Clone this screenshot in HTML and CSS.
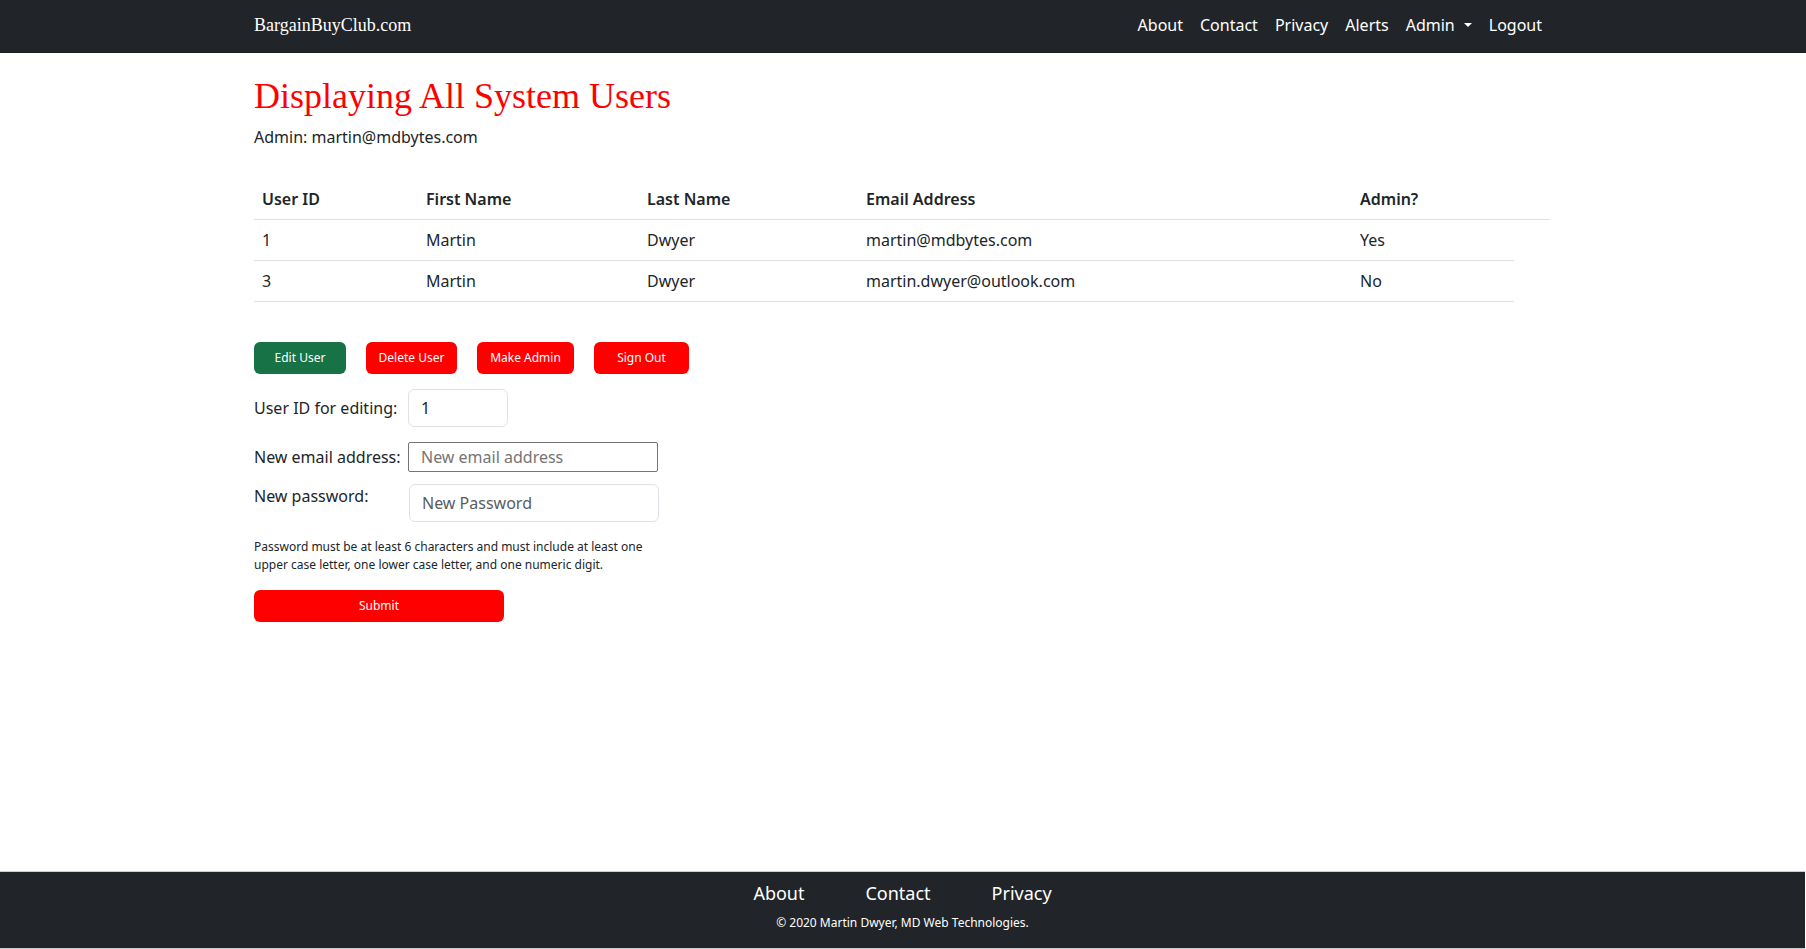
FILE: index.html
```html
<!DOCTYPE html>
<html lang="en">
<head>
<meta charset="utf-8">
<meta name="viewport" content="width=device-width, initial-scale=1">
<title>BargainBuyClub.com</title>
<link rel="stylesheet" href="styles.css">
</head>
<body>
<header class="site-header">
  <div class="container header-inner">
    <a class="brand" href="#">BargainBuyClub.com</a>
    <nav class="main-nav">
      <a href="#">About</a>
      <a href="#">Contact</a>
      <a href="#">Privacy</a>
      <a href="#">Alerts</a>
      <a class="dropdown" href="#">Admin</a>
      <a href="#">Logout</a>
    </nav>
  </div>
</header>
<main class="container content">
  <h1 class="title">Displaying All System Users</h1>
  <p class="current-user">Admin: martin@mdbytes.com</p>
  <table class="users">
    <colgroup><col class="c-id"><col class="c-first"><col class="c-last"><col class="c-email"><col class="c-admin"><col class="c-extra"></colgroup>
    <thead>
      <tr><th>User ID</th><th>First Name</th><th>Last Name</th><th>Email Address</th><th>Admin?</th><th></th></tr>
    </thead>
    <tbody>
      <tr><td>1</td><td>Martin</td><td>Dwyer</td><td>martin@mdbytes.com</td><td>Yes</td></tr>
      <tr><td>3</td><td>Martin</td><td>Dwyer</td><td>martin.dwyer@outlook.com</td><td>No</td></tr>
    </tbody>
  </table>
  <div class="actions">
    <button class="btn btn-edit" type="button">Edit User</button>
    <button class="btn btn-delete" type="button">Delete User</button>
    <button class="btn btn-make" type="button">Make Admin</button>
    <button class="btn btn-out" type="button">Sign Out</button>
  </div>
  <form class="edit-form">
    <div class="field">
      <label for="user-id">User ID for editing:</label>
      <input class="control control-short" id="user-id" type="text" value="1">
    </div>
    <div class="field">
      <label for="email">New email address:</label>
      <input class="control control-plain" id="email" type="email" placeholder="New email address">
    </div>
    <div class="field field-top">
      <label for="password">New password:</label>
      <input class="control" id="password" type="password" placeholder="New Password">
    </div>
    <p class="hint">Password must be at least 6 characters and must include at least one<br>upper case letter, one lower case letter, and one numeric digit.</p>
    <button class="btn btn-submit" type="submit">Submit</button>
  </form>
</main>
<footer class="site-footer">
  <nav class="footer-nav">
    <a href="#">About</a>
    <a href="#">Contact</a>
    <a href="#">Privacy</a>
  </nav>
  <p class="copyright">© 2020 Martin Dwyer, MD Web Technologies.</p>
</footer>
</body>
</html>
```
FILE: styles.css
```css
* { box-sizing: border-box; }
body {
  display: flex;
  flex-direction: column;
  min-height: 100vh;
  margin: 0;
  background: #fff;
  color: #212529;
  font: 16px/24px "Noto Sans", sans-serif;
}
h1, p { margin: 0; }
a { color: inherit; text-decoration: none; }
.container {
  width: 100%;
  max-width: 1320px;
  margin: 0 auto;
  padding: 0 13px 0 11px;
}
.site-header {
  background: #212529;
  border-bottom: 1px solid #1b1b24;
  color: #fff;
}
.header-inner {
  display: flex;
  align-items: center;
  justify-content: space-between;
  height: 52px;
  padding-bottom: 3px;
}
.brand { font: 18px/30px "Mountains of Christmas", "Liberation Serif", serif; }
.main-nav { display: flex; gap: 17px; padding-right: 8px; }
.dropdown { display: flex; align-items: center; gap: 9px; }
.dropdown::after {
  content: "";
  border: 4px solid transparent;
  border-top-color: currentColor;
  border-bottom: 0;
}
.content { flex: 1; padding-top: 18px; }
.title {
  margin-bottom: 4px;
  color: #f00;
  font: 36px/50px "Mountains of Christmas", "Liberation Serif", serif;
}
.current-user { margin-bottom: 30px; }
.users {
  width: 100%;
  table-layout: fixed;
  border-spacing: 0;
  text-align: left;
}
.users th, .users td { padding: 8px; border-bottom: 1px solid #dee2e6; }
.users th { font-weight: 600; }
.c-id { width: 164px; }
.c-first { width: 221px; }
.c-last { width: 219px; }
.c-email { width: 494px; }
.c-admin { width: 162px; }
.actions { display: flex; gap: 20px; margin: 40px 0 15px; }
.btn {
  height: 32px;
  padding: 0;
  border: 0;
  border-radius: 6px;
  background: #f00;
  color: #fff;
  font: 12px/18px "Noto Sans", sans-serif;
}
.btn-edit { width: 92px; background: #177245; }
.btn-delete { width: 91px; }
.btn-make { width: 97px; }
.btn-out { width: 95px; }
.btn-submit { width: 250px; }
.field { display: flex; align-items: center; margin-bottom: 15px; }
.field label { width: 154px; }
.control {
  width: 250px;
  height: 38px;
  padding: 0 12px;
  border: 1px solid #dee2e6;
  border-radius: 6px;
  background: #fff;
  color: #212529;
  font: 16px/24px "Noto Sans", sans-serif;
}
.control::placeholder { color: #595c5f; }
.control-short { width: 100px; }
.control-plain { height: 30px; border: 1px solid #767676; border-radius: 2px; }
.control-plain::placeholder { color: #757575; }
.field-top { align-items: flex-start; margin: -3px 0 16px; }
.field-top label { width: 155px; }
.hint { margin-bottom: 16px; font-size: 12px; line-height: 18px; }
.site-footer {
  height: 78px;
  margin-right: 1px;
  padding-top: 9px;
  border: solid #ccc;
  border-width: 1px 0;
  background: #212529;
  color: #fff;
  text-align: center;
}
.footer-nav { display: flex; justify-content: center; gap: 61px; font-size: 18px; }
.copyright { margin-top: 9px; font-size: 12px; line-height: 18px; }
```
